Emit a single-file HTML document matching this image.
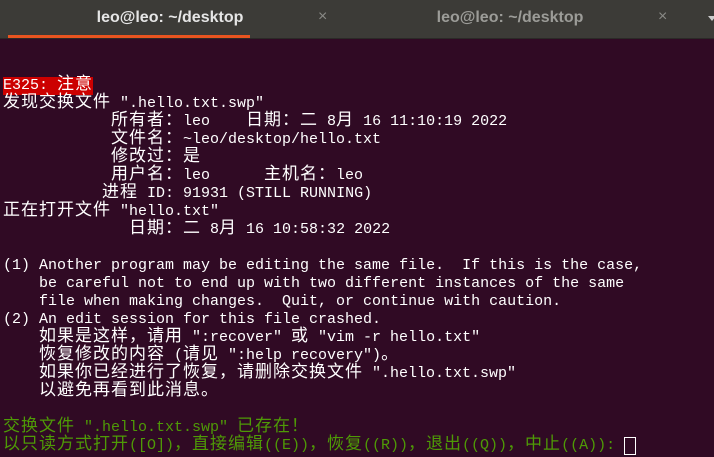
<!DOCTYPE html>
<html><head><meta charset="utf-8"><style>
html,body{margin:0;padding:0;width:714px;height:457px;overflow:hidden;background:#300a24}
.tabs{position:absolute;left:0;top:0;width:714px;height:38px;background:#3c3b37;border-bottom:1px solid #2b2a27;font-family:"Liberation Sans","DejaVu Sans",sans-serif;font-size:16px;font-weight:bold}
.tab{position:absolute;top:0;height:38px;line-height:36px;text-align:center;width:340px}
.t1{left:0;color:#e6e6e6}.t2{left:340px;color:#9c9c98}
.x{position:absolute;top:0;line-height:34px;font-size:16px;color:#8a8a86;font-weight:normal}
.ul{position:absolute;left:8px;top:35px;width:242px;height:3px;background:#e95420}
.term{position:absolute;left:3px;top:41px;font-family:"Liberation Mono",monospace;font-size:15px;color:#ffffff}
.term div{height:18px;line-height:18px;white-space:pre;overflow:visible}
.c{font-family:"Noto Sans CJK SC",sans-serif;font-size:17px;letter-spacing:1px;line-height:0}
.r{background:#cc0000;display:inline-block;height:18px;vertical-align:top}
.g{color:#4e9a06}
.cur{display:inline-block;width:10px;height:16px;border:1px solid #fff;vertical-align:top}
</style></head><body>
<div class="tabs">
<div class="tab t1">leo@leo: ~/desktop</div><div class="x" style="left:318px">×</div>
<div class="tab t2">leo@leo: ~/desktop</div><div class="x" style="left:658px">×</div>
<div style="position:absolute;left:708px;top:16px;border-left:4px solid transparent;border-right:4px solid transparent;border-top:5px solid #ccc"></div>
<div class="ul"></div>
</div>
<div class="term">
<div></div><div></div>
<div><span class="r">E325: <span class="c">注意</span></span></div>
<div><span class="c">发现交换文件</span> ".hello.txt.swp"</div>
<div>            <span class="c">所有者：</span>leo    <span class="c">日期：二</span> 8<span class="c">月</span> 16 11:10:19 2022</div>
<div>            <span class="c">文件名：</span>~leo/desktop/hello.txt</div>
<div>            <span class="c">修改过：是</span></div>
<div>            <span class="c">用户名：</span>leo      <span class="c">主机名：</span>leo</div>
<div>           <span class="c">进程</span> ID: 91931 (STILL RUNNING)</div>
<div><span class="c">正在打开文件</span> "hello.txt"</div>
<div>              <span class="c">日期：二</span> 8<span class="c">月</span> 16 10:58:32 2022</div>
<div></div>
<div>(1) Another program may be editing the same file.  If this is the case,</div>
<div>    be careful not to end up with two different instances of the same</div>
<div>    file when making changes.  Quit, or continue with caution.</div>
<div>(2) An edit session for this file crashed.</div>
<div>    <span class="c">如果是这样，请用</span> ":recover" <span class="c">或</span> "vim -r hello.txt"</div>
<div>    <span class="c">恢复修改的内容</span> (<span class="c">请见</span> ":help recovery")<span class="c">。</span></div>
<div>    <span class="c">如果你已经进行了恢复，请删除交换文件</span> ".hello.txt.swp"</div>
<div>    <span class="c">以避免再看到此消息。</span></div>
<div></div>
<div class="g"><span class="c">交换文件</span> ".hello.txt.swp" <span class="c">已存在！</span></div>
<div><span class="g"><span class="c">以只读方式打开</span>([O])<span class="c">，直接编辑</span>((E))<span class="c">，恢复</span>((R))<span class="c">，退出</span>((Q))<span class="c">，中止</span>((A)):</span> <span class="cur"></span></div>
</div>
</body></html>
